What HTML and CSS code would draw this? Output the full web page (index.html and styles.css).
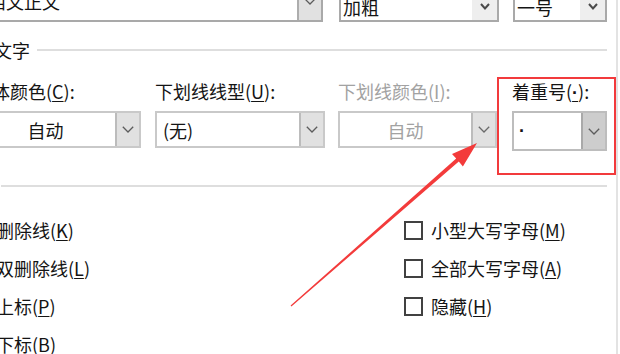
FILE: index.html
```html
<!DOCTYPE html>
<html lang="zh-CN">
<head>
<meta charset="utf-8">
<title>字体</title>
<link rel="stylesheet" href="styles.css">
</head>
<body>
<div class="viewport">
  <div class="dialog">
    <div class="row-top">
      <div class="combo c-font">
        <span class="val">+西文正文</span>
        <span class="btn"><svg class="chev" width="12" height="7" viewBox="0 0 12 7"><path d="M0.8 0.8 L6 6 L11.2 0.8"/></svg></span>
      </div>
      <div class="combo c-style">
        <span class="val">加粗</span>
        <span class="btn flat"><svg class="chev bold" width="10" height="7" viewBox="0 0 10 7"><path d="M1 1 L5 5.5 L9 1"/></svg></span>
      </div>
      <div class="combo c-size">
        <span class="val">一号</span>
        <span class="btn flat"><svg class="chev bold" width="10" height="7" viewBox="0 0 10 7"><path d="M1 1 L5 5.5 L9 1"/></svg></span>
      </div>
    </div>

    <div class="group-head head-all"><span class="head-text">所有文字</span><i class="rule"></i></div>

    <div class="fields">
      <div class="field f1">
        <div class="label">字体颜色(<u>C</u>):</div>
        <div class="combo">
          <span class="val center">自动</span>
          <span class="btn"><svg class="chev" width="12" height="7" viewBox="0 0 12 7"><path d="M0.8 0.8 L6 6 L11.2 0.8"/></svg></span>
        </div>
      </div>
      <div class="field f2">
        <div class="label">下划线线型(<u>U</u>):</div>
        <div class="combo">
          <span class="val pad">(无)</span>
          <span class="btn"><svg class="chev" width="12" height="7" viewBox="0 0 12 7"><path d="M0.8 0.8 L6 6 L11.2 0.8"/></svg></span>
        </div>
      </div>
      <div class="field f3 disabled">
        <div class="label">下划线颜色(<u>I</u>):</div>
        <div class="combo">
          <span class="val center">自动</span>
          <span class="btn"><svg class="chev" width="12" height="7" viewBox="0 0 12 7"><path d="M0.8 0.8 L6 6 L11.2 0.8"/></svg></span>
        </div>
      </div>
      <div class="field f4">
        <div class="label">着重号(<u class="dot">·</u>):</div>
        <div class="combo emph">
          <span class="val pad"><span class="dot">·</span></span>
          <span class="btn"><svg class="chev" width="12" height="7" viewBox="0 0 12 7"><path d="M0.8 0.8 L6 6 L11.2 0.8"/></svg></span>
        </div>
      </div>
    </div>

    <div class="group-head head-effects"><span class="head-text">效果</span><i class="rule"></i></div>

    <div class="checks">
      <label class="check"><span class="box"></span><span>删除线(<u>K</u>)</span></label>
      <label class="check"><span class="box"></span><span>小型大写字母(<u>M</u>)</span></label>
      <label class="check"><span class="box"></span><span>双删除线(<u>L</u>)</span></label>
      <label class="check"><span class="box"></span><span>全部大写字母(<u>A</u>)</span></label>
      <label class="check"><span class="box"></span><span>上标(<u>P</u>)</span></label>
      <label class="check"><span class="box"></span><span>隐藏(<u>H</u>)</span></label>
      <label class="check"><span class="box"></span><span>下标(<u>B</u>)</span></label>
    </div>
  </div>

  <div class="highlight"></div>
  <svg class="arrow" width="620" height="354" viewBox="0 0 620 354">
    <polygon points="477,143 462.9,166.4 458.8,161.6 291.4,306.5 290.6,305.5 456.2,158.6 452.0,153.9"/>
  </svg>
</div>
</body>
</html>
```

FILE: styles.css
```css
* { box-sizing: border-box; }

html, body {
  margin: 0;
  padding: 0;
}

body {
  width: 620px;
  height: 354px;
  overflow: hidden;
  background: #ffffff;
  font-family: "Noto Sans CJK SC", "Microsoft YaHei", sans-serif;
  font-size: 18px;
  color: #141414;
}

u {
  text-decoration: underline;
  text-decoration-thickness: 1px;
  text-underline-offset: 2px;
}

.dot {
  font-family: "Liberation Sans", Arial, sans-serif;
  font-weight: bold;
}

.viewport {
  position: relative;
  width: 620px;
  height: 354px;
  overflow: hidden;
}

.dialog {
  margin: -20px 0 0 -50px;
  width: 668px;
  height: 420px;
  padding: 0 9px 0 8px;
  border-right: 2px solid #e3e3e3;
}

/* ---------- combo boxes ---------- */
.combo {
  display: flex;
  align-items: stretch;
  height: 37px;
  background: #ffffff;
  border: 2px solid #c9c9c9;
}

.combo .val {
  flex: 1;
  display: flex;
  align-items: center;
  padding: 0 2px;
  line-height: 1;
  white-space: nowrap;
  overflow: hidden;
}

.combo .val.center { justify-content: center; }
.combo .val.pad { padding-left: 6px; }

.combo .btn {
  width: 24px;
  display: flex;
  align-items: center;
  justify-content: center;
  background: #e1e1e1;
  border-left: 2px solid #bcbcbc;
}

.chev path {
  fill: none;
  stroke: #5c5c5c;
  stroke-width: 1.3;
}

.chev.bold path {
  stroke: #4a4a4a;
  stroke-width: 2;
}

/* ---------- top row ---------- */
.row-top {
  display: flex;
  align-items: flex-end;
  height: 42px;
  margin-left: 16px;
}

.row-top .combo { border-color: #a9a9a9; }

.c-font { width: 349px; height: 42px; }
.c-font .btn { border-left-color: #adadad; }

.c-style { width: 160px; height: 31px; margin-left: 16px; }
.c-size { width: 94px; height: 31px; margin-left: 14px; }

.combo .btn.flat {
  width: 25px;
  border-left: none;
  background: #eeeeee;
}

/* ---------- group headers ---------- */
.group-head {
  display: flex;
  align-items: center;
  height: 20px;
  line-height: 20px;
}

.head-all { margin-top: 18px; }
.head-effects { margin-top: 25px; }

.head-text { white-space: nowrap; }

.rule {
  flex: 1;
  height: 2px;
  margin-left: 7px;
  background: #dedede;
}

/* ---------- field row ---------- */
.fields {
  display: flex;
  align-items: flex-start;
  margin-left: 16px;
}

.field {
  display: flex;
  flex-direction: column;
}

.f1 { width: 167px; }
.f2 { width: 170px; margin-left: 14px; }
.f3 { width: 159px; margin-left: 13px; }
.f4 { width: 95px; margin-left: 15px; }

.label {
  height: 24px;
  line-height: 24px;
  margin-top: 19px;
  white-space: nowrap;
}

.field .combo { margin-top: 8px; }

.disabled .label,
.disabled .val { color: #a2a2a2; }
.disabled .chev path { stroke: #6a6a6a; }

.combo.emph {
  height: 40px;
  border-color: #bdbdbd;
}

.combo.emph .val { padding-left: 5px; }

.combo.emph .btn {
  background: #cdcdcd;
  border-left-color: #a9a9a9;
}

/* ---------- checkboxes ---------- */
.checks {
  display: grid;
  grid-template-columns: 435px 1fr;
  grid-auto-rows: 38px;
  margin: 15px 0 0 11px;
}

.check {
  display: flex;
  align-items: center;
  gap: 8px;
  white-space: nowrap;
}

.check .box {
  width: 19px;
  height: 19px;
  flex: none;
  border: 2px solid #414141;
  background: #ffffff;
}

/* ---------- annotations ---------- */
.highlight {
  position: absolute;
  left: 497px;
  top: 77px;
  width: 119px;
  height: 98px;
  border: 2px solid #f23a3c;
}

.arrow {
  position: absolute;
  left: 0;
  top: 0;
}

.arrow polygon { fill: #f33b3b; }
```
